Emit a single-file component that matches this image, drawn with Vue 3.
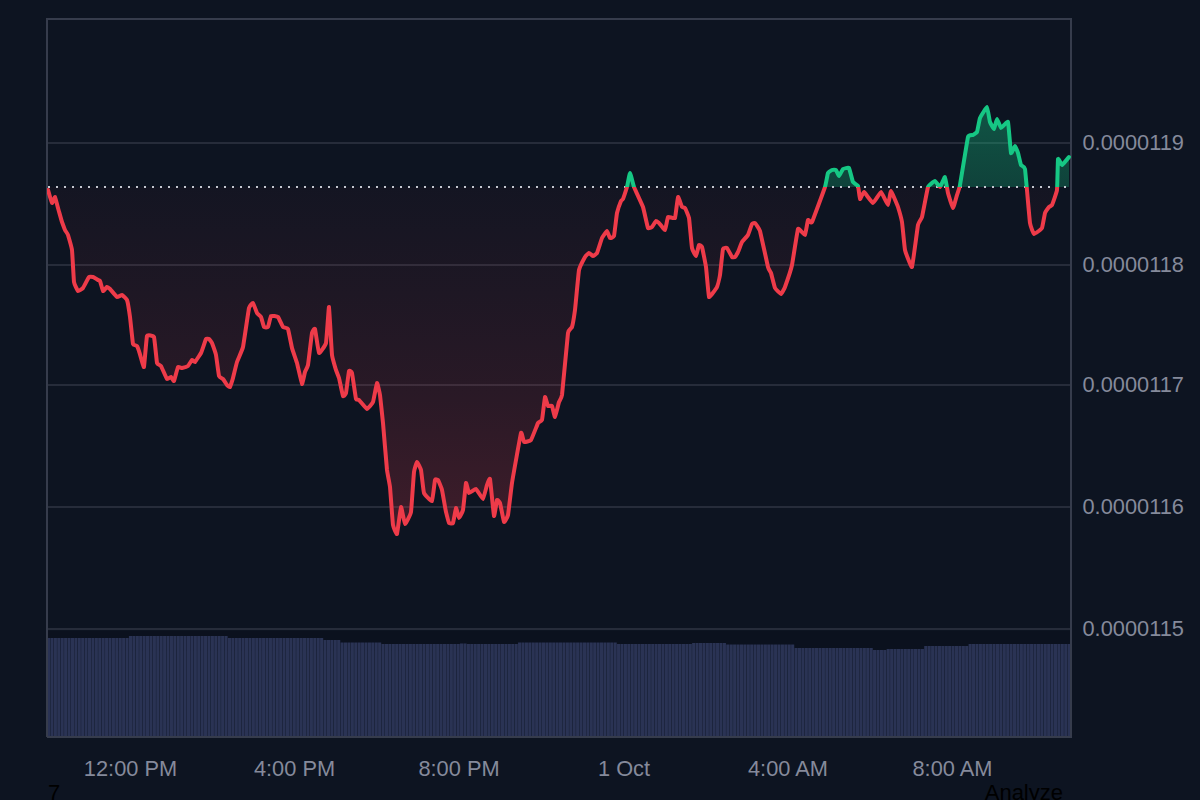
<script setup>
const line = [[48,190],[52,203],[55,197],[58,208],[62,222],[65,230],[68,235],[72,250],[74,282],[78,291],[83,288],[89,277],[93,277],[98,280],[100,281],[103,291],[107,287],[110,289],[117,297],[122,295],[127,300],[130,317],[133,344],[137,346],[141,358],[144,367],[147,336],[154,337],[157,363],[161,366],[167,379],[171,377],[174,381],[178,367],[182,368],[188,366],[192,360],[195,362],[201,353],[206,339],[209,339],[212,343],[216,355],[219,376],[223,379],[227,385],[230,387],[233,378],[237,362],[243,347],[249,308],[253,303],[257,313],[261,317],[264,327],[268,327],[271,316],[278,317],[283,327],[288,329],[292,348],[297,363],[302,384],[305,372],[308,365],[312,333],[315,329],[319,353],[326,343],[329,307],[332,355],[336,370],[339,378],[343,396],[346,393],[349,371],[352,373],[356,399],[359,400],[367,409],[373,402],[377,383],[380,395],[383,423],[387,470],[390,487],[393,525],[397,534],[401,507],[405,524],[411,512],[414,472],[417,462],[421,470],[424,493],[432,501],[435,480],[438,480],[442,490],[446,512],[449,523],[453,523],[456,508],[459,518],[463,510],[466,483],[469,493],[476,489],[483,499],[487,485],[490,479],[494,516],[497,500],[500,503],[504,522],[508,515],[512,483],[521,433],[524,442],[531,440],[538,423],[542,420],[545,397],[548,406],[552,406],[555,417],[559,402],[562,395],[568,333],[572,327],[575,310],[579,270],[585,257],[589,253],[593,256],[597,253],[602,238],[607,231],[610,238],[614,236],[617,213],[621,201],[623,199],[627,187],[630,173],[634,187],[643,207],[648,228],[652,227],[656,221],[659,223],[665,230],[668,217],[675,218],[678,197],[682,207],[685,208],[689,218],[692,248],[696,256],[699,245],[702,247],[706,267],[709,297],[717,287],[720,275],[723,249],[727,248],[732,257],[735,257],[738,252],[742,242],[748,235],[752,224],[755,223],[760,231],[768,267],[771,273],[775,288],[781,294],[785,287],[792,265],[798,229],[805,235],[808,220],[812,222],[825,187],[828,173],[832,170],[836,170],[839,176],[843,169],[849,168],[853,182],[858,186],[860,199],[864,192],[873,203],[881,192],[888,205],[891,191],[898,207],[902,222],[905,250],[912,267],[918,225],[922,217],[928,187],[935,181],[940,187],[945,177],[948,193],[953,208],[957,195],[960,185],[968,137],[973,135],[977,132],[980,118],[987,107],[990,122],[994,129],[997,119],[1001,128],[1008,122],[1011,153],[1015,146],[1018,153],[1021,165],[1025,169],[1030,223],[1034,234],[1042,228],[1045,213],[1049,207],[1052,205],[1057,190],[1058,159],[1062,165],[1069,157]]

const base = 187
const k = 0.05
const linePath = line.reduce((d, p, i) => {
  if (i === 0) return `M${p[0]} ${p[1]}`
  const a = line[i - 1]
  const before = line[i - 2] || a
  const after = line[i + 1] || p
  const c1x = a[0] + (p[0] - before[0]) * k
  const c1y = a[1] + (p[1] - before[1]) * k
  const c2x = p[0] - (after[0] - a[0]) * k
  const c2y = p[1] - (after[1] - a[1]) * k
  return `${d}C${c1x.toFixed(1)} ${c1y.toFixed(1)} ${c2x.toFixed(1)} ${c2y.toFixed(1)} ${p[0]} ${p[1]}`
}, '')
const areaPath = `${linePath}L1069 ${base}L48 ${base}Z`

const grid = [143, 265, 385, 507, 629]
const priceLabels = [
  { y: 143, text: '0.0000119' },
  { y: 265, text: '0.0000118' },
  { y: 385, text: '0.0000117' },
  { y: 507, text: '0.0000116' },
  { y: 629, text: '0.0000115' }
]
const timeLabels = [
  { x: 130.5, text: '12:00 PM' },
  { x: 294.5, text: '4:00 PM' },
  { x: 459, text: '8:00 PM' },
  { x: 624, text: '1 Oct' },
  { x: 788, text: '4:00 AM' },
  { x: 952.5, text: '8:00 AM' }
]

const levels = [[128,638],[225,636],[252,638],[255,637],[323,638],[338,640],[380,642.5],[458,644],[465,643.5],[517,644],[615,642.5],[690,644],[725,643],[793,644.5],[870,648],[884,650],[924,649],[968,646],[1072,644]]
const step = 1024 / 300
const bars = Array.from({ length: 300 }, (_, i) => {
  const x = 47 + i * step
  const top = levels.find(l => x < l[0])[1]
  return { x, y: top, h: 737 - top }
})
</script>

<template>
  <div class="page">
    <svg class="chart" viewBox="0 0 1200 780" width="1200" height="780">
      <defs>
        <linearGradient id="redFill" gradientUnits="userSpaceOnUse" x1="0" y1="187" x2="0" y2="534">
          <stop offset="0" stop-color="#ee3b49" stop-opacity="0.03" />
          <stop offset="0.33" stop-color="#ee3b49" stop-opacity="0.08" />
          <stop offset="0.62" stop-color="#ee3b49" stop-opacity="0.13" />
          <stop offset="0.9" stop-color="#ee3b49" stop-opacity="0.2" />
          <stop offset="1" stop-color="#ee3b49" stop-opacity="0.24" />
        </linearGradient>
        <linearGradient id="greenFill" gradientUnits="userSpaceOnUse" x1="0" y1="107" x2="0" y2="187">
          <stop offset="0" stop-color="#16c784" stop-opacity="0.36" />
          <stop offset="1" stop-color="#16c784" stop-opacity="0.26" />
        </linearGradient>
        <clipPath id="above"><rect x="47" y="19" width="1024" height="168" /></clipPath>
        <clipPath id="below"><rect x="47" y="187" width="1024" height="550" /></clipPath>
      </defs>

      <line v-for="y in grid" :key="y" class="grid" x1="47" x2="1071" :y1="y" :y2="y" />

      <rect class="band" x="48" y="631" width="1022" height="20" />
      <rect
        v-for="(b, i) in bars"
        :key="i"
        class="bar"
        :x="b.x"
        :y="b.y"
        :width="step - 0.3"
        :height="b.h"
      />

      <path class="area" :d="areaPath" fill="url(#redFill)" clip-path="url(#below)" />
      <path class="area" :d="areaPath" fill="url(#greenFill)" clip-path="url(#above)" />

      <path class="frame" d="M47 737V19H1071V737H47" />

      <line class="baseline" x1="48" x2="1071" y1="187" y2="187" />

      <path class="stroke red" :d="linePath" clip-path="url(#below)" />
      <path class="stroke green" :d="linePath" clip-path="url(#above)" />

      <text
        v-for="p in priceLabels"
        :key="p.text"
        class="label"
        x="1082.5"
        :y="p.y + 7"
      >{{ p.text }}</text>
      <text
        v-for="t in timeLabels"
        :key="t.text"
        class="label middle"
        :x="t.x"
        y="775.5"
      >{{ t.text }}</text>
    </svg>
    <div class="footer">
      <span>7</span>
      <span>Analyze</span>
    </div>
  </div>
</template>

<style scoped>
.page {
  width: 1200px;
  height: 800px;
  overflow: hidden;
  background: #0d1421;
}
.chart {
  display: block;
}
.grid {
  stroke: #262c3a;
  stroke-width: 2;
}
.band {
  fill: #0b111e;
}
.bar {
  fill: #2a3354;
}
.frame {
  fill: none;
  stroke: #363c4c;
  stroke-width: 2;
}
.baseline {
  stroke: #c4c8d0;
  stroke-width: 2;
  stroke-dasharray: 2 6;
}
.stroke {
  fill: none;
  stroke-width: 4;
  stroke-linejoin: round;
  stroke-linecap: round;
}
.red {
  stroke: #ee3b49;
}
.green {
  stroke: #16c784;
}
.label {
  font-family: "Liberation Sans", Arial, sans-serif;
  font-size: 21.8px;
  fill: #858a9b;
}
.middle {
  text-anchor: middle;
}
.footer {
  display: flex;
  justify-content: space-between;
  padding: 0 137px 0 48px;
  font-family: "Liberation Sans", Arial, sans-serif;
  font-size: 22px;
  color: #000;
}
</style>

<style>
html, body {
  margin: 0;
  background: #0d1421;
  overflow: hidden;
}
</style>
